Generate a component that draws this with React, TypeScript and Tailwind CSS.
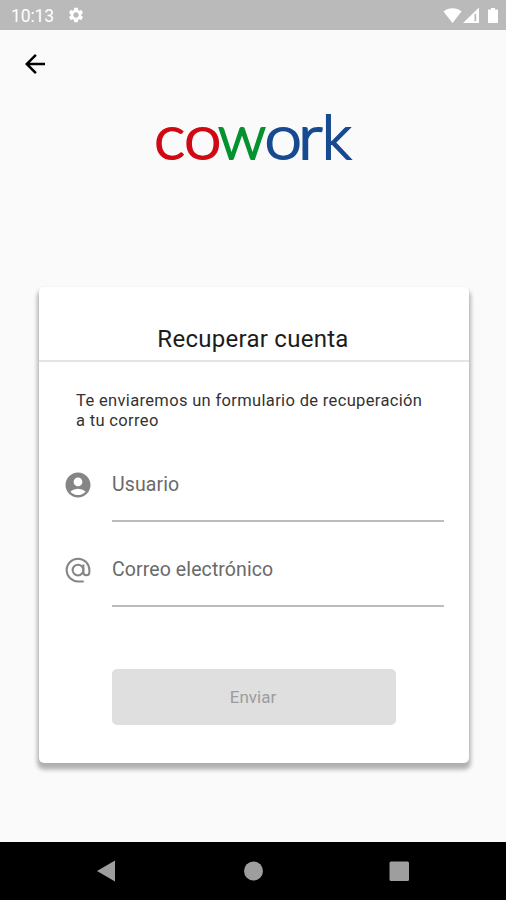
import { ReactNode } from "react";
import { MdAccountCircle, MdArrowBack, MdSettings } from "react-icons/md";

const LETTERS = [
  { char: "c", x: 14, width: 31, color: "#cf0a14" },
  { char: "o", x: 44, width: 37.5, color: "#cf0a14" },
  { char: "w", x: 78, width: 48, color: "#06922f" },
  { char: "o", x: 124.5, width: 37.5, color: "#184a91" },
  { char: "r", x: 158, width: 24.5, color: "#184a91" },
  { char: "k", x: 182, width: 29, color: "#184a91" },
];

function StatusBar() {
  return (
    <div className="flex h-[30px] items-center bg-[#bababa] pr-[7px] pl-[11px] text-white">
      <span className="pt-[2px] text-[17.5px] leading-[28px] tracking-[-0.1px]">10:13</span>
      <MdSettings className="ml-[13px] size-[18px]" />
      <svg className="ml-auto h-[17px] w-[56px]" viewBox="0 0 56 17" fill="currentColor">
        <path d="M0.5 4.5C5.5 0.3 13.5 0.3 18.5 4.5L9.5 16Z" />
        <path fillRule="evenodd" d="M20 16 36 0.5V16ZM31.5 7v7.200h1.700V7Z" />
        <path d="M46 2.500h2V1h4v1.500h2c.6 0 1 .4 1 1V15c0 .6-.4 1-1 1h-8c-.6 0-1-.4-1-1V3.500c0-.6.4-1 1-1Z" />
      </svg>
    </div>
  );
}

function Logo() {
  return (
    <svg
      className="mx-auto h-[90px] w-[226px] font-['Lato',sans-serif] font-light"
      viewBox="0 0 226 90"
      fontSize="61"
      strokeWidth="2.1"
    >
      {LETTERS.map(({ char, x, width, color }) => (
        <text
          key={x}
          x={x}
          y="67.5"
          textLength={width}
          lengthAdjust="spacingAndGlyphs"
          fill={color}
          stroke={color}
        >
          {char}
        </text>
      ))}
    </svg>
  );
}

function AtIcon() {
  return (
    <svg
      className="size-[30px]"
      viewBox="0 0 24 24"
      fill="none"
      stroke="currentColor"
      strokeWidth="1.6"
    >
      <circle cx="12" cy="12" r="4.300" />
      <path d="M16.300 7.500v6.200c0 1.500 1.100 2.500 2.400 2.500s2.400-1 2.400-2.500V12a9.100 9.100 0 1 0-9.100 9.100h4.600" />
    </svg>
  );
}

function Field({ icon, label }: { icon: ReactNode; label: string }) {
  return (
    <div className="flex h-[85px] pr-[25px] pl-6">
      <div className="mt-[11px] size-[30px] text-[#858585]">{icon}</div>
      <label className="ml-[19px] h-[63px] flex-1 border-b-2 border-[#bcbcbc] pt-[12px] text-[19.5px] leading-[28px] tracking-[0.1px] text-[#6a6a6a]">
        {label}
      </label>
    </div>
  );
}

function NavBar() {
  return (
    <div className="flex h-[58px] justify-center bg-black pt-[1px]">
      <svg className="h-[57px] w-[320px]" viewBox="0 0 320 57" fill="#9e9e9e">
        <path d="M4 28 22 17.500v21Z" />
        <circle cx="160.500" cy="28" r="9.500" />
        <rect x="296.500" y="18.500" width="19.500" height="19.500" rx="1.500" />
      </svg>
    </div>
  );
}

export default function App() {
  return (
    <div className="flex h-[900px] w-[506px] flex-col overflow-hidden bg-[#fafafa] font-['Roboto',sans-serif]">
      <StatusBar />
      <header className="flex h-[61px] shrink-0 pt-[19px] pl-5">
        <button className="size-[30px]">
          <MdArrowBack className="size-[30px]" />
        </button>
      </header>
      <Logo />

      <main className="mt-[106px] ml-[39px] h-[476px] w-[430px] rounded-[5px] bg-white shadow-[0_5px_4px_2px_rgba(0,0,0,0.22),0_4px_4px_1px_rgba(0,0,0,0.1)]">
        <h1 className="h-[75px] border-b-2 border-[#e4e4e4] pt-[37px] pr-[2px] text-center text-[24px] leading-[30px] tracking-[0.27px] text-[#1c1c1c]">
          Recuperar cuenta
        </h1>
        <p className="mt-[29px] mb-[28px] pl-[37px] text-[16.5px] leading-[20px] tracking-[0.34px] text-[#333]">
          Te enviaremos un formulario de recuperación
          <br />a tu correo
        </p>
        <Field icon={<MdAccountCircle className="size-[30px]" />} label="Usuario" />
        <Field icon={<AtIcon />} label="Correo electrónico" />
        <button className="mt-[40px] ml-[73px] h-[56px] w-[284px] rounded-[5px] bg-[#dfdfdf] pt-[2px] pr-[2px] text-[17px] text-[#9c9c9c]">
          Enviar
        </button>
      </main>

      <div className="mt-auto">
        <NavBar />
      </div>
    </div>
  );
}
